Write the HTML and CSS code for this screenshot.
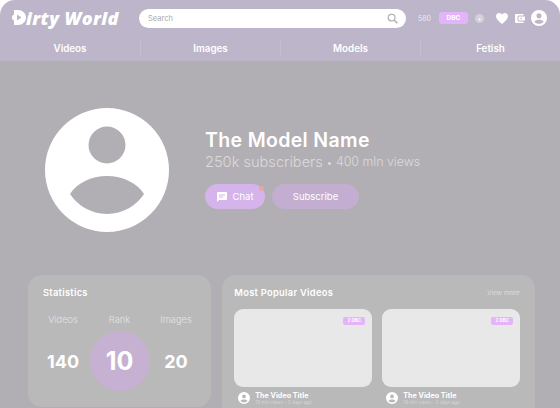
FILE: index.html
```html
<!DOCTYPE html>
<html>
    <head>
        <meta charset="utf-8" />
        <title>Dirty World</title>
        <link rel="stylesheet" href="styles.css">
    </head>

    <body>
        <div class="page">
            <div class="header-wrap">
            <header class="header">
                <div class="topbar">
                    <a class="logo">
                        <svg class="logo-mark" viewBox="0 0 14 17" width="14" height="17">
                            <path d="M2 1h4c4.500 0 8 3.200 8 7.500S10.500 16 6 16H2v-4.500L0 10V7l2-1.500z" fill="#fff"/>
                            <path d="M5 5.500l4.500 3L5 11.500z" fill="#bdb5c9"/>
                        </svg>
                        <span>irty World</span>
                    </a>
                    <div class="search">
                        <span>Search</span>
                        <svg viewBox="0 0 12 12" width="11" height="11">
                            <circle cx="5" cy="5" r="3.700" fill="none" stroke="#aaa" stroke-width="1.200"/>
                            <path d="M8 8l3.300 3.300" stroke="#aaa" stroke-width="1.500"/>
                        </svg>
                    </div>
                    <span class="balance">580</span>
                    <span class="coin">DBC</span>
                    <span class="plus">+</span>
                    <svg class="icon-heart" viewBox="0 0 24 22" width="12" height="11">
                        <path d="M12 22C4 15 0 11 0 6.500 0 3 2.700 0 6.300 0 8.500 0 10.800 1.200 12 3.200 13.200 1.200 15.500 0 17.700 0 21.300 0 24 3 24 6.500 24 11 20 15 12 22z" fill="#fff"/>
                    </svg>
                    <svg class="icon-wallet" viewBox="0 0 20 18" width="10" height="9">
                        <path d="M2 0h15v3H8a3 3 0 0 0-3 3v6a3 3 0 0 0 3 3h9v3H2a2 2 0 0 1-2-2V2a2 2 0 0 1 2-2z" fill="#fff"/>
                        <path d="M8 5h12v8H8a1 1 0 0 1-1-1V6a1 1 0 0 1 1-1z" fill="#fff"/>
                        <circle cx="12" cy="9" r="1.500" fill="#bdb5c9"/>
                    </svg>
                    <svg class="icon-user" viewBox="0 0 24 24" width="16" height="16">
                        <path fill-rule="evenodd" fill="#fff" d="M12 0a12 12 0 1 1 0 24 12 12 0 0 1 0-24zm0 5a3.800 3.800 0 1 0 0 7.600A3.800 3.800 0 0 0 12 5zm0 9.800c-3 0-5.600 1-7 2.800 1.600 2 4.100 3.200 7 3.200s5.400-1.200 7-3.200c-1.400-1.800-4-2.800-7-2.800z"/>
                    </svg>
                </div>
                <nav class="nav">
                    <a>Videos</a>
                    <a>Images</a>
                    <a>Models</a>
                    <a>Fetish</a>
                </nav>
            </header>
            </div>

            <section class="profile">
                <svg class="avatar" viewBox="0 0 124 124" width="124" height="124">
                    <circle cx="62" cy="62" r="62" fill="#fff"/>
                    <circle cx="62" cy="37" r="18.500" fill="#b1afb3"/>
                    <path d="M25 86c7-11 21-18 37-18s30 7 37 18c-7 11-21 20-37 20s-30-9-37-20z" fill="#b1afb3"/>
                </svg>
                <div class="profile-info">
                    <h1>The Model Name</h1>
                    <p class="counts"><span class="subs">250k subscribers</span> <span class="dot"></span> <span>400 mln views</span></p>
                    <div class="actions">
                        <a class="btn btn-chat">
                            <svg viewBox="0 0 20 20" width="10" height="10">
                                <path d="M2 0h16a2 2 0 0 1 2 2v12a2 2 0 0 1-2 2H4l-4 4V2a2 2 0 0 1 2-2z" fill="#fff"/>
                                <path d="M4 5h12v2H4zM4 9h8v2H4z" fill="#d5b4ec"/>
                            </svg>
                            Chat
                            <span class="badge"></span>
                        </a>
                        <a class="btn btn-subscribe">Subscribe</a>
                    </div>
                </div>
            </section>

            <section class="panels">
                <div class="card stats">
                    <h3>Statistics</h3>
                    <div class="stats-grid">
                        <span class="stat-label">Videos</span>
                        <span class="stat-label">Rank</span>
                        <span class="stat-label">Images</span>
                        <span class="stat-num">140</span>
                        <span class="stat-rank">10</span>
                        <span class="stat-num">20</span>
                    </div>
                </div>
                <div class="card popular">
                    <div class="popular-head">
                        <h3>Most Popular Videos</h3>
                        <a>View more</a>
                    </div>
                    <div class="videos">
                        <div class="video">
                            <div class="thumb"><span class="price">2 DBC</span></div>
                            <div class="video-meta">
                                <svg viewBox="0 0 24 24" width="12" height="12">
                                    <path fill-rule="evenodd" fill="#fff" d="M12 0a12 12 0 1 1 0 24 12 12 0 0 1 0-24zm0 5a3.800 3.800 0 1 0 0 7.600A3.800 3.800 0 0 0 12 5zm0 9.800c-3 0-5.600 1-7 2.800 1.600 2 4.100 3.200 7 3.200s5.400-1.200 7-3.200c-1.400-1.800-4-2.800-7-2.800z"/>
                                </svg>
                                <div>
                                    <div class="video-title">The Video Title</div>
                                    <div class="video-sub">19 mln views - 2 days ago</div>
                                </div>
                            </div>
                        </div>
                        <div class="video">
                            <div class="thumb"><span class="price">2 DBC</span></div>
                            <div class="video-meta">
                                <svg viewBox="0 0 24 24" width="12" height="12">
                                    <path fill-rule="evenodd" fill="#fff" d="M12 0a12 12 0 1 1 0 24 12 12 0 0 1 0-24zm0 5a3.800 3.800 0 1 0 0 7.600A3.800 3.800 0 0 0 12 5zm0 9.800c-3 0-5.600 1-7 2.800 1.600 2 4.100 3.200 7 3.200s5.400-1.200 7-3.200c-1.400-1.800-4-2.800-7-2.800z"/>
                                </svg>
                                <div>
                                    <div class="video-title">The Video Title</div>
                                    <div class="video-sub">19 mln views - 2 days ago</div>
                                </div>
                            </div>
                        </div>
                    </div>
                </div>
            </section>
        </div>
    </body>
</html>
```

FILE: styles.css
```css
html,
body {
    margin: 0;
    padding: 0;
    background: #b1afb3;
    font-family: 'Inter', 'Open Sans', sans-serif;
    color: #fff;
}

body {
    overflow: hidden;
    height: 408px;
}

h1,
h3,
p {
    margin: 0;
}

.page {
    width: 560px;
    height: 408px;
    overflow: hidden;
}

.header-wrap {
    background: #fff;
}

.header {
    background: #bdb5c9;
    border-radius: 15px 15px 0 0;
    height: 61px;
}

.topbar {
    display: flex;
    align-items: center;
    height: 36px;
    padding-left: 12px;
    box-sizing: border-box;
}

.logo {
    display: flex;
    align-items: center;
    width: 127px;
    font-family: 'Open Sans', sans-serif;
    font-style: italic;
    font-weight: 800;
    font-size: 18px;
    letter-spacing: 0.4px;
}

.logo-mark {
    margin-top: -2px;
}

.search {
    display: flex;
    align-items: center;
    justify-content: space-between;
    box-sizing: border-box;
    width: 267px;
    height: 19px;
    padding: 0 8px 0 9px;
    background: #fff;
    border-radius: 10px;
    font-size: 7.500px;
    color: #aaa;
}

.balance {
    margin-left: 12px;
    width: 20px;
    font-size: 7px;
    color: #ece9f0;
}

.coin {
    margin-left: 1px;
    width: 29px;
    height: 12px;
    background: #e4b4fb;
    border-radius: 3px;
    font-size: 6.500px;
    font-weight: 700;
    line-height: 12px;
    text-align: center;
}

.plus {
    margin-left: 7px;
    width: 9px;
    height: 9px;
    background: #d3cfdb;
    border-radius: 50%;
    font-size: 7px;
    line-height: 9px;
    text-align: center;
}

.icon-heart {
    margin-left: 12px;
}

.icon-wallet {
    margin-left: 7px;
}

.icon-user {
    margin-left: 6px;
}

.nav {
    display: grid;
    grid-template-columns: repeat(4, 140px);
    height: 25px;
}

.nav a {
    display: flex;
    align-items: center;
    justify-content: center;
    height: 14px;
    margin-top: 5px;
    font-size: 9.800px;
    font-weight: 600;
    border-left: 1px solid #c6bfd0;
    box-sizing: border-box;
}

.nav a:first-child {
    border-left: none;
}

.profile {
    display: flex;
    align-items: center;
    padding: 47px 0 0 45px;
}

.profile-info {
    margin: -2px 0 0 36px;
}

h1 {
    font-size: 19.500px;
    font-weight: 600;
    line-height: 22px;
    letter-spacing: 0.35px;
}

.counts {
    display: flex;
    align-items: center;
    gap: 5px;
    margin-top: 2px;
    font-size: 12.400px;
    font-weight: 300;
    color: #dcdadd;
    line-height: 18px;
}

.subs {
    font-size: 14.600px;
}

.dot {
    width: 3px;
    height: 3px;
    margin-top: 2px;
    background: #dcdadd;
    border-radius: 50%;
}

.actions {
    display: flex;
    gap: 7px;
    margin-top: 13px;
}

.btn {
    display: flex;
    align-items: center;
    justify-content: center;
    height: 25px;
    border-radius: 13px;
    font-size: 9.500px;
    color: #fff;
}

.btn-chat {
    position: relative;
    width: 60px;
    gap: 6px;
    background: #d5b4ec;
}

.btn-subscribe {
    width: 87px;
    background: #c3aed1;
}

.badge {
    position: absolute;
    top: 2px;
    right: 1px;
    width: 5px;
    height: 5px;
    background: #e5a6a6;
    border-radius: 50%;
}

.panels {
    display: flex;
    gap: 10.500px;
    align-items: flex-start;
    margin-top: 43px;
    padding-left: 28px;
}

.card {
    background: #b9b9ba;
    border-radius: 14px;
}

.card h3 {
    font-size: 9.300px;
    font-weight: 600;
    line-height: 12px;
    letter-spacing: 0.3px;
}

.stats {
    box-sizing: border-box;
    width: 183px;
    height: 132px;
    padding: 12px 0 0 15px;
}

.stats-grid {
    display: grid;
    grid-template-columns: 42px 71px 42px;
    grid-template-rows: 12px 60px;
    row-gap: 6px;
    margin: 14px 0 0 -1px;
    justify-items: center;
    align-items: center;
}

.stat-label {
    font-size: 9.300px;
    font-weight: 300;
    color: #e4e3e5;
}

.stat-num {
    font-size: 18px;
    font-weight: 700;
}

.stat-rank {
    display: flex;
    align-items: center;
    justify-content: center;
    width: 60px;
    height: 60px;
    background: #c6b1d2;
    border-radius: 50%;
    font-size: 25px;
    font-weight: 700;
}

.popular {
    box-sizing: border-box;
    width: 313px;
    height: 160px;
    padding: 12px 15px 0 12.800px;
}

.popular-head {
    display: flex;
    align-items: center;
    justify-content: space-between;
}

.popular-head a {
    font-size: 6.500px;
    font-weight: 300;
    color: #e4e3e5;
}

.videos {
    display: grid;
    grid-template-columns: 138px 138px;
    gap: 10px;
    margin-top: 10px;
}

.thumb {
    display: flex;
    justify-content: flex-end;
    align-items: flex-start;
    height: 78px;
    padding: 8px 7px 0 0;
    box-sizing: border-box;
    background: #e8e8e8;
    border-radius: 9px;
}

.price {
    width: 22px;
    height: 8px;
    background: #e4b4fb;
    border-radius: 2px;
    font-size: 4.500px;
    font-weight: 700;
    line-height: 8px;
    text-align: center;
}

.video-meta {
    display: flex;
    align-items: center;
    gap: 5px;
    margin-top: 4px;
    padding-left: 4px;
}

.video-title {
    font-size: 7.200px;
    font-weight: 700;
    line-height: 7px;
    margin-top: 1px;
}

.video-sub {
    font-size: 4.700px;
    font-weight: 300;
    line-height: 6px;
    color: #dededf;
}
```
